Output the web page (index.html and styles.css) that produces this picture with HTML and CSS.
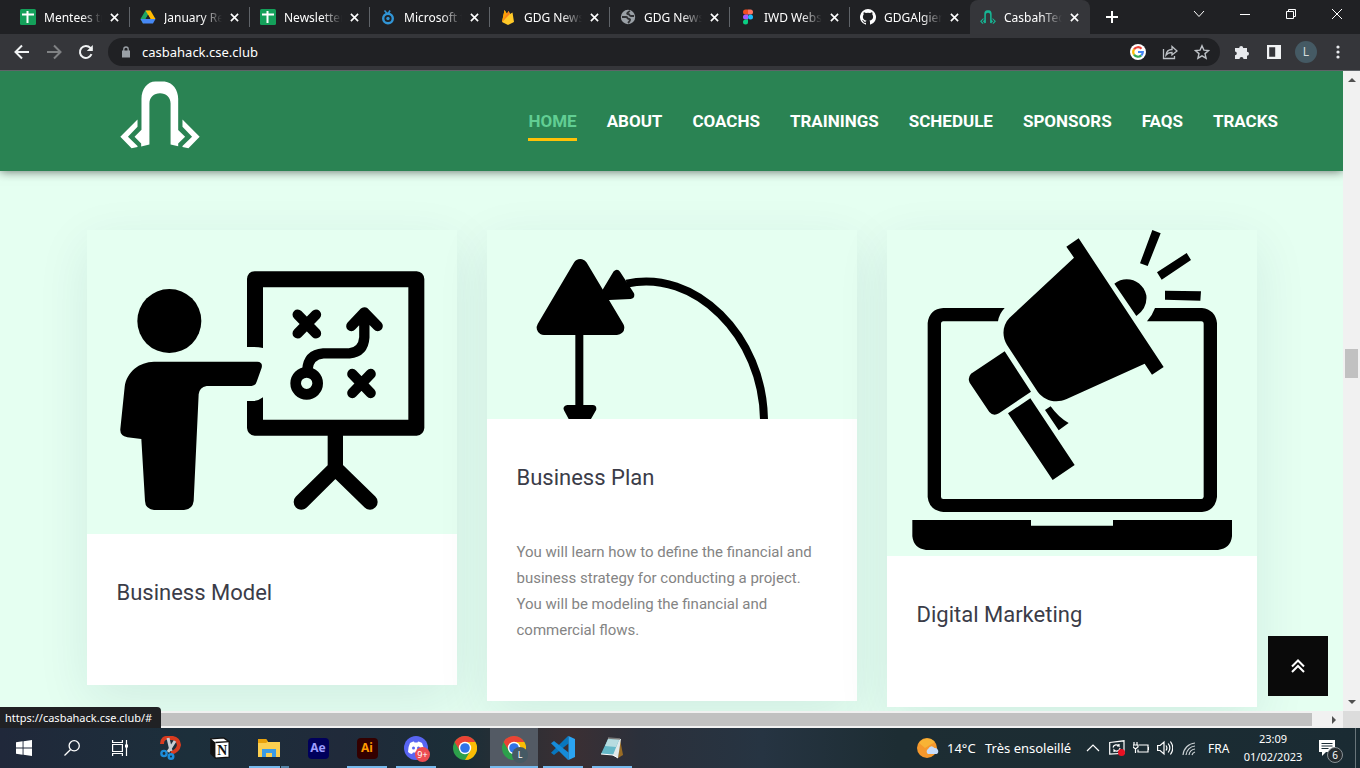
FILE: index.html
```html
<!DOCTYPE html>
<html lang="en">
<head>
<meta charset="utf-8">
<title>CasbahTech</title>
<link rel="stylesheet" href="styles.css">
</head>
<body>
<svg class="defs" aria-hidden="true">
  <symbol id="x" viewBox="0 0 10 10"><path d="M1 1l8 8M9 1L1 9" stroke="currentColor" stroke-width="1.8" fill="none"/></symbol>
  <symbol id="sheet" viewBox="0 0 16 16"><rect width="16" height="16" rx="1.5" fill="#14a05a"/><path d="M2 5.500h12M7.500 2v12" stroke="#fff" stroke-width="2"/></symbol>
  <symbol id="drive" viewBox="0 0 16 16"><path d="M5.500 1.500h5L8 6 3 14.500.5 10z" fill="#1fa463"/><path d="M10.500 1.500L15.500 10h-5L5.500 1.500z" fill="#ffba00"/><path d="M.5 10h15L13 14.500H3z" fill="#4688f4"/><path d="M8 6l2.400 4H5.600z" fill="#202124"/></symbol>
  <symbol id="chrome" viewBox="0 0 24 24"><circle cx="12" cy="12" r="12" fill="#2da04b"/><path d="M1.600 6A12 12 0 0 1 22.400 6L12 6.500 7 15z" fill="#ea4335"/><path d="M22.400 6A12 12 0 0 1 12 24l5.200-9L17.200 9 12 6z" fill="#fbbc05"/><circle cx="12" cy="12" r="6.200" fill="#fff"/><circle cx="12" cy="12" r="4.800" fill="#2f73e8"/></symbol>
  <symbol id="arch" viewBox="120 33 242 203"><path fill="currentColor" d="M184 230v-9l-20-21 21-21V85c0-29 18-52 42-52h28c24 3 41 25 41 52v95l21 20-21 21v8l-23-5V100c0-19-14-31-32-31s-32 12-32 31v124zM173 148l-52 52 34 35 18-4v-3l-29-28 29-30zM309 148l52 52-34 35-18-4v-3l29-28-29-30z"/></symbol>
</svg>
<div class="browser">
  <div class="tabstrip">
    <div class="tabs">
      <div class="tab"><svg class="fav"><use href="#sheet"/></svg><span class="tab-name">Mentees tr</span><button class="close" aria-label="Close Mentees"><svg><use href="#x"/></svg></button></div>
      <div class="tab"><svg class="fav"><use href="#drive"/></svg><span class="tab-name">January Re</span><button class="close" aria-label="Close January"><svg><use href="#x"/></svg></button></div>
      <div class="tab"><svg class="fav"><use href="#sheet"/></svg><span class="tab-name">Newsletter</span><button class="close" aria-label="Close Newsletter"><svg><use href="#x"/></svg></button></div>
      <div class="tab"><svg class="fav" viewBox="0 0 16 16"><g fill="none" stroke="#3195d6"><circle cx="8" cy="9.500" r="4.800" stroke-width="2.400"/><path d="M4.500 1.500l3 3.500M10 1.500L8 5" stroke-width="1.600"/></g><circle cx="8" cy="9.500" r="1.700" fill="#3195d6"/></svg><span class="tab-name">Microsoft f</span><button class="close" aria-label="Close Microsoft"><svg><use href="#x"/></svg></button></div>
      <div class="tab"><svg class="fav" viewBox="0 0 16 16"><path d="M2 13L4.500 1 7 5l1.500-3L10 5l2.500-1.500L14 13l-6 3z" fill="#ffc928"/><path d="M2 13L4.500 1 7 5l-3 6z" fill="#ffa000"/><path d="M2 13L8.500 2 10 5z" fill="#f58220"/></svg><span class="tab-name">GDG News</span><button class="close" aria-label="Close GDG News"><svg><use href="#x"/></svg></button></div>
      <div class="tab"><svg class="fav" viewBox="0 0 16 16"><circle cx="8" cy="8" r="7.200" fill="#9aa0a6"/><path d="M2 8h4c2 0 1 2 3 2s1 2-1 4M14 7h-3c-2 0-1-2-3-2S8 3 10 2" fill="none" stroke="#303134" stroke-width="1.800"/></svg><span class="tab-name">GDG News</span><button class="close" aria-label="Close GDG News 2"><svg><use href="#x"/></svg></button></div>
      <div class="tab"><svg class="fav" viewBox="0 0 16 16"><path d="M8 .5H5.500a2.500 2.500 0 0 0 0 5H8z" fill="#f24e1e"/><path d="M8 .5h2.500a2.500 2.500 0 0 1 0 5H8z" fill="#ff7262"/><path d="M8 5.500H5.500a2.500 2.500 0 0 0 0 5H8z" fill="#a259ff"/><circle cx="10.500" cy="8" r="2.500" fill="#1abcfe"/><path d="M8 10.500H5.500A2.500 2.500 0 1 0 8 13z" fill="#0acf83"/></svg><span class="tab-name">IWD Webs</span><button class="close" aria-label="Close IWD Website"><svg><use href="#x"/></svg></button></div>
      <div class="tab"><svg class="fav" viewBox="0 0 16 16"><path fill="#fff" d="M8 0a8 8 0 0 0-2.500 15.600c.4.100.5-.2.500-.4v-1.400c-2.200.5-2.700-1-2.700-1-.4-.9-.9-1.200-.9-1.200-.7-.5.100-.5.100-.5.800.100 1.200.8 1.200.8.700 1.300 1.900.9 2.300.7.100-.5.300-.9.500-1.100-1.800-.2-3.600-.9-3.600-4 0-.9.300-1.600.8-2.100-.1-.2-.4-1 .1-2.100 0 0 .7-.2 2.200.8a7.500 7.500 0 0 1 4 0c1.500-1 2.200-.8 2.200-.8.4 1.100.2 1.900.1 2.100.5.600.8 1.300.8 2.100 0 3.100-1.900 3.800-3.700 4 .3.300.6.800.6 1.500v2.200c0 .2.100.5.500.4A8 8 0 0 0 8 0z"/></svg><span class="tab-name">GDGAlgier</span><button class="close" aria-label="Close GDGAlgiers"><svg><use href="#x"/></svg></button></div>
      <div class="tab tab-active"><svg class="fav teal"><use href="#arch"/></svg><span class="tab-name">CasbahTec</span><button class="close" aria-label="Close CasbahTech"><svg><use href="#x"/></svg></button></div>
    </div>
    <button class="new-tab" aria-label="New tab"><svg viewBox="0 0 12 12"><path d="M6 0v12M0 6h12" stroke="#fff" stroke-width="2"/></svg></button>
    <div class="window-controls">
      <button aria-label="Search tabs"><svg viewBox="0 0 12 12"><path d="M1 3l5 5.500L11 3"/></svg></button>
      <button aria-label="Minimize"><svg viewBox="0 0 12 12"><path d="M1 6.500h10"/></svg></button>
      <button aria-label="Restore"><svg viewBox="0 0 12 12"><path d="M1.500 3.500h7v7h-7zM3.500 3.500v-2h7v7h-2"/></svg></button>
      <button aria-label="Close window"><svg viewBox="0 0 12 12"><path d="M1 1l10 10M11 1L1 11"/></svg></button>
    </div>
  </div>
  <div class="toolbar">
    <div class="nav-buttons">
      <button aria-label="Back"><svg viewBox="0 0 16 16"><path d="M15 8H2M8 1.500L1.500 8 8 14.500"/></svg></button>
      <button class="dim" aria-label="Forward"><svg viewBox="0 0 16 16"><path d="M1 8h13M8 1.500L14.500 8 8 14.500"/></svg></button>
      <button aria-label="Reload"><svg viewBox="0 0 16 16"><path d="M13.500 10.200A6 6 0 1 1 12.400 3.900L14 5.500"/><path d="M14.800 1v6h-6z" class="solid"/></svg></button>
    </div>
    <div class="omnibox">
      <svg class="lock" viewBox="0 0 10 12"><rect x="1" y="4.500" width="8" height="7" fill="#9aa0a6"/><path d="M2.800 5V3.200a2.200 2.200 0 0 1 4.400 0V5" fill="none" stroke="#9aa0a6" stroke-width="1.300"/></svg>
      <input class="address" type="text" aria-label="Address" value="casbahack.cse.club">
      <button aria-label="Google"><svg viewBox="0 0 16 16"><circle cx="8" cy="8" r="8" fill="#fff"/><g fill="none" stroke-width="2.200"><path d="M4 5.400A4.800 4.800 0 0 1 11.500 4.700" stroke="#ea4335"/><path d="M4 10.600a4.800 4.800 0 0 1 0-5.200" stroke="#fbbc05"/><path d="M11.300 11.400A4.800 4.800 0 0 1 4 10.600" stroke="#34a853"/><path d="M8 8h4.800a4.800 4.800 0 0 1-1.500 3.400" stroke="#4285f4"/></g></svg></button>
      <button aria-label="Share"><svg viewBox="0 0 16 16" fill="none" stroke="#bdc1c6" stroke-width="1.300"><path d="M1.500 5v9.500h11V12"/><path d="M4 11c.5-4 3-5.500 6-5.500V2.500L15 7l-5 4V8.500C7.500 8.500 5.500 9 4 11z"/></svg></button>
      <button aria-label="Bookmark"><svg viewBox="0 0 16 16" fill="none" stroke="#bdc1c6" stroke-width="1.400"><path d="M8 1.800l1.900 4.300 4.700.4-3.600 3.100 1.100 4.600L8 11.800l-4.100 2.400L5 9.600 1.400 6.500l4.700-.4z"/></svg></button>
    </div>
    <div class="tools">
      <button aria-label="Extensions"><svg viewBox="0 0 16 16"><path fill="#e8eaed" d="M1 4h4.200a2 2 0 1 1 4 0H13v3.800a2 2 0 1 1 0 4V15H9.500a2 2 0 0 0-4 0H1v-3.800a1.800 1.800 0 0 0 0-3.600z"/></svg></button>
      <button aria-label="Side panel"><svg viewBox="0 0 16 16"><path fill="#f1f3f4" fill-rule="evenodd" d="M1 1h14v14H1zM3.200 3.200v9.600h6V3.200z"/></svg></button>
      <button aria-label="Profile"><span class="avatar">L</span></button>
      <button aria-label="Menu"><svg viewBox="0 0 16 16" fill="#e8eaed"><circle cx="8" cy="3" r="1.600"/><circle cx="8" cy="8" r="1.600"/><circle cx="8" cy="13" r="1.600"/></svg></button>
    </div>
  </div>
  <div class="viewport">
    <div class="page">
      <header class="site-header">
        <a class="logo" href="#" aria-label="CasbahTech"><svg><use href="#arch"/></svg></a>
        <nav class="site-nav">
          <a class="current" href="#">HOME</a><a href="#">ABOUT</a><a href="#">COACHS</a><a href="#">TRAININGS</a><a href="#">SCHEDULE</a><a href="#">SPONSORS</a><a href="#">FAQS</a><a href="#">TRACKS</a>
        </nav>
      </header>
      <main class="cards">
        <article class="card">
          <svg class="card-art" viewBox="21 15 1110 912">
            <circle cx="268" cy="288" r="96"/>
            <path d="M222 410H532Q549 411 545 428L530 470Q526 483 515 483H380Q358 487 356 508L341 828Q338 853 312 855H222Q196 852 195 828L184 642L142 637Q119 632 121 612L134 486C140 440 178 411 222 410z"/>
            <path d="M501 366V162Q503 140 524 139H1010Q1031 141 1033 162V609Q1031 630 1010 632H524Q503 630 501 609V528H522Q538 526 549 517V584H985V187H549V369Q535 366 520 366z"/>
            <g fill="none" stroke="#000" stroke-linecap="round" stroke-linejoin="round">
              <path d="M653 269L708 325M708 269L653 325M817 447L872 504M872 447L817 504" stroke-width="31"/>
              <path d="M814 303L853 262L893 303M853 270V337Q850 381 808 385H730Q684 389 682 435" stroke-width="31"/>
              <circle cx="680" cy="475" r="33" stroke-width="32"/>
              <path d="M766 632V730M664 831L766 730L870 831" stroke-width="46"/>
            </g>
          </svg>
          <div class="card-body"><h3>Business Model</h3></div>
        </article>
        <article class="card">
          <svg class="card-art" viewBox="21 15 1110 567">
            <g stroke="#000" stroke-linejoin="round">
              <path d="M301 124L192 308H411z" stroke-width="44"/>
              <path d="M410 147L370 214L451 210z" stroke-width="24"/>
              <path d="M262 551H338L310 600H288z" stroke-width="22"/>
            </g>
            <path d="M298 320V560M440 176C640 130 852 330 852 590" fill="none" stroke="#000" stroke-width="24"/>
          </svg>
          <div class="card-body"><h3>Business Plan</h3><p>You will learn how to define the financial and business strategy for conducting a project. You will be modeling the financial and commercial flows.</p></div>
        </article>
        <article class="card">
          <svg class="card-art" viewBox="21 15 1110 978">
            <path d="M374 249H190Q148 252 143 294V816Q147 856 190 861H966Q1006 857 1011 816V294Q1006 254 966 249H825Q816 273 801 289H964Q971 289 971 297V815Q970 822 964 822H190Q183 822 183 815V297Q183 289 190 289H354Q357 267 374 249z"/>
            <path d="M97 885H453V902H699V885H1056V934Q1052 970 1014 975H138Q101 970 97 934z"/>
            <path d="M596 40L851 426L816 449L794 416L560 522C526 537 493 526 473 500L381 360C365 333 367 302 388 279L582 98L559 65z"/>
            <path d="M374 379L453 500L357 565Q340 575 328 561L269 473Q262 459 273 446zM451 520L584 720L518 765L384 565zM495 555L512 544Q535 577 566 594L536 616z"/>
            <path d="M703 176C739 148 790 168 799 211Q803 249 769 273zM817 15L842 25L803 123L780 115zM920 84L933 105L845 164L831 142zM855 197L963 199L961 227L855 224z"/>
          </svg>
          <div class="card-body"><h3>Digital Marketing</h3></div>
        </article>
      </main>
      <button class="to-top" aria-label="Back to top"><svg viewBox="0 0 16 16"><path d="M2 8.500l6-6 6 6M2 14l6-6 6 6"/></svg></button>
    </div>
    <div class="vscroll"><svg viewBox="0 0 8 4"><path d="M0 4l4-4 4 4z"/></svg><div class="vtrack"><div class="vspace"></div><div class="vthumb"></div></div><svg viewBox="0 0 8 4"><path d="M0 0l4 4 4-4z"/></svg></div>
    <div class="hscroll"><div class="hthumb"></div><svg viewBox="0 0 4 8"><path d="M0 0l4 4-4 4z"/></svg></div>
    <div class="corner"></div>
    <div class="status">https://casbahack.cse.club/#</div>
  </div>
</div>
<footer class="taskbar">
  <div class="system">
    <button aria-label="Start"><svg class="i16" viewBox="0 0 16 16"><path fill="#fff" d="M0 2.200L6.600 1.300v6.200H0zM7.500 1.200L16 0v7.500H7.500zM0 8.500h6.600v6.200L0 13.800zM7.500 8.500H16V16l-8.500-1.200z"/></svg></button>
    <button aria-label="Search"><svg class="i16" viewBox="0 0 16 16" fill="none" stroke="#fff" stroke-width="1.300"><circle cx="10.200" cy="5.800" r="5.100"/><path d="M6.600 9.500L.5 15.500"/></svg></button>
    <button aria-label="Task view"><svg class="i16" viewBox="0 0 16 16" fill="none" stroke="#fff" stroke-width="1.200"><path d="M.6 0v2.500h9.800V0M.6 16v-2.500h9.800V16M.6 4.500h9.800v7H.6zM14.500 0v16"/><path d="M13 4.500h3v3h-3z" fill="#fff" stroke="none"/></svg></button>
  </div>
  <div class="apps">
    <button aria-label="Snipping Tool"><svg class="i24" viewBox="0 0 24 24"><path d="M3 8Q3 1 10 2Q19 1 20 9Q19 15 12 17" fill="none" stroke="#d83b1f" stroke-width="4"/><path d="M9 2l3 13M16 5L9 16" stroke="#c7ccd1" stroke-width="3"/><g fill="none" stroke="#1e8ddb" stroke-width="2.400"><circle cx="5" cy="17.500" r="2.600"/><circle cx="12" cy="20.500" r="2.300"/></g></svg></button>
    <button aria-label="Notion"><svg class="i22" viewBox="0 0 22 24"><path d="M1 2l14-1 6 4v17l-15 1-5-5z" fill="#fff" stroke="#111" stroke-width="1.500"/><path d="M1 2l5 4v17l-5-5z" fill="#111"/><path d="M6 6l15-1" stroke="#111" stroke-width="1.500"/><text x="8" y="20" class="notion">N</text></svg></button>
    <button class="open split" aria-label="File Explorer"><svg class="i22" viewBox="0 0 22 20"><path d="M0 1h8l2 3h12v15H0z" fill="#fccf50"/><path d="M0 1h8l2 2.500-2 1.500H0z" fill="#e9a20b"/><path d="M4 11h14v8h-4v-4H8v4H4z" fill="#3b9be5"/></svg></button>
    <button aria-label="After Effects"><span class="adobe ae">Ae</span></button>
    <button class="open" aria-label="Illustrator"><span class="adobe ai">Ai</span></button>
    <button class="open" aria-label="Discord"><svg class="i24" viewBox="0 0 24 24"><circle cx="12" cy="12" r="12" fill="#5865f2"/><path fill="#fff" d="M6 7q3-2 4-1.500l.5 1h3l.5-1q2 0 4 1.500 2 4 2 9-2 2-4 2l-1-1.500H9L8 18q-2 0-4-2 0-5 2-9z"/><circle cx="9.500" cy="12" r="1.500" fill="#5865f2"/><circle cx="14.500" cy="12" r="1.500" fill="#5865f2"/></svg><span class="count">9+</span></button>
    <button aria-label="Chrome"><svg class="i24"><use href="#chrome"/></svg></button>
    <button class="open focused" aria-label="Chrome profile L"><svg class="i24"><use href="#chrome"/></svg><span class="profile">L</span></button>
    <button class="open" aria-label="VS Code"><svg class="i24" viewBox="0 0 24 24"><path d="M17.500 0v7.500L3 19 0 16.800 17 0z" fill="#0877bf"/><path d="M0 7.200L3 5l14.500 11.500V24H17z" fill="#168bd8"/><path d="M17.500 0L24 3v18l-6.500 3z" fill="#2ba4f2"/></svg></button>
    <button class="open" aria-label="Notepad"><svg class="i22" viewBox="0 0 22 22"><path d="M19 2l3 16-5 3z" fill="#9a6c24"/><path d="M7 1l13 1-3 19-6-3z" fill="#e1e9e9"/><path d="M7 2l11 1-6 15-12-1z" fill="#65b8c8"/><path d="M7 2l11 1-3 7-11-1z" fill="#b7dce0"/><path d="M7 1l12 1" stroke="#777" stroke-width="1.500"/><path d="M0 17l12 1 5 3" fill="none" stroke="#fff"/></svg></button>
  </div>
  <div class="tray">
    <svg class="i22" viewBox="0 0 22 20"><circle cx="10" cy="10" r="10" fill="#f5982c"/><path d="M2 5A10 10 0 0 1 18 4L8 10z" fill="#fac53c" opacity=".6"/><path d="M11 16a3 3 0 0 1 0-5q3-5 6.500-1a3.200 3.200 0 0 1 2 6z" fill="#c6dcfa"/></svg>
    <span class="temp">14°C</span><span class="weather">Très ensoleillé</span>
    <div class="tray-icons">
      <svg viewBox="0 0 16 16"><path d="M2 11l6-6 6 6"/></svg>
      <svg viewBox="0 0 16 16"><path d="M.7 2.500L15 .8v12.500L.7 14zM4 7.500A3.500 3.500 0 0 1 10 6V4M10 6H8M11 8a3.500 3.500 0 0 1-6 2v2"/><circle cx="12.500" cy="12.500" r="3.500" class="alert"/></svg>
      <svg viewBox="0 0 16 16"><path d="M6 5h9v7H5V9.500M15.700 7v3M1 2v3M4 2v3M0 5h5v2L2.500 9 0 7zM2.500 9v4"/></svg>
      <svg viewBox="0 0 16 16"><path d="M.6 5.500h2.500L7 2v12l-3.900-3.500H.6zM9 5.500q1.800 2.500 0 5M11.200 3.500q3.300 4.500 0 9M13.400 1.500q4.800 6.500 0 13"/></svg>
      <svg viewBox="0 0 16 16"><path d="M2 15A13 13 0 0 1 14 3M5 15A10 10 0 0 1 14 6M8 15a7 7 0 0 1 6-6M11 15a4 4 0 0 1 3-3" stroke="#ccd2d5"/></svg>
    </div>
    <span class="lang">FRA</span>
    <div class="clock"><time>23:09</time><span>01/02/2023</span></div>
    <div class="notice"><svg viewBox="0 0 16 16"><path fill="#fff" d="M0 0h16v12H7l-4 4v-4H0z"/><path d="M2.500 3.500h11M2.500 6h11M2.500 8.500h7" stroke="#1b2d36" stroke-width="1.200"/></svg><span>6</span></div>
    <div class="desktop-edge"></div>
  </div>
</footer>
</body>
</html>
```
FILE: styles.css
```css
* { box-sizing: border-box; }
body {
  margin: 0;
  height: 100vh;
  display: flex;
  flex-direction: column;
  overflow: hidden;
  font-family: "Noto Sans", "Open Sans", sans-serif;
  font-size: 12px;
  color: #fff;
}
button {
  border: 0;
  padding: 0;
  background: none;
  color: inherit;
  font: inherit;
  display: flex;
  align-items: center;
  justify-content: center;
}
svg { display: block; }
.defs { position: absolute; width: 0; height: 0; }
.browser { flex: 1; min-height: 0; display: flex; flex-direction: column; }

/* Tab strip */
.tabstrip { height: 34px; display: flex; background: #202124; padding-left: 10px; }
.tabs { display: flex; }
.tab {
  width: 120px;
  display: flex;
  align-items: center;
  padding-left: 10px;
  background: linear-gradient(#5f6368, #5f6368) right center / 1px 20px no-repeat;
}
.tab:nth-last-child(2) { background: none; }
.tab-active { background: #35363a; border-radius: 8px 8px 0 0; }
.fav { width: 16px; height: 16px; flex: none; }
.teal { color: #16b795; }
.tab-name {
  margin-left: 8px;
  width: 58px;
  white-space: nowrap;
  mask-image: linear-gradient(90deg, #000 65%, transparent);
}
.close { width: 24px; height: 24px; }
.close svg { width: 9px; height: 9px; }
.new-tab { width: 44px; }
.new-tab svg { width: 12px; height: 12px; }
.window-controls { margin-left: auto; display: flex; height: 28px; }
.window-controls button { width: 46px; }
.window-controls svg { width: 12px; height: 12px; fill: none; stroke: #fff; }

/* Toolbar */
.toolbar { height: 37px; display: flex; align-items: center; background: #35363a; border-bottom: 1px solid #5f6368; }
.nav-buttons { display: flex; padding: 0 6px; }
.nav-buttons button { width: 32px; height: 32px; }
.nav-buttons svg { width: 16px; height: 16px; fill: none; stroke: #f1f3f4; stroke-width: 2; }
.nav-buttons .solid { fill: #f1f3f4; stroke: none; }
.dim { opacity: .4; }
.omnibox {
  flex: 1;
  height: 28px;
  display: flex;
  align-items: center;
  background: #202124;
  border-radius: 14px;
  padding: 0 2px 0 13px;
}
.lock { width: 10px; height: 12px; }
.address {
  flex: 1;
  min-width: 0;
  margin-left: 11px;
  padding: 0;
  border: 0;
  outline: 0;
  background: none;
  color: #fff;
  font: 13px "Noto Sans", sans-serif;
}
.omnibox button { width: 32px; height: 28px; }
.omnibox button svg, .tools svg { width: 16px; height: 16px; }
.tools { display: flex; align-items: center; padding: 0 6px; }
.tools button { width: 32px; height: 28px; }
.avatar { width: 22px; height: 22px; border-radius: 50%; background: #455a64; color: #d5dadd; line-height: 22px; }

/* Page area with scrollbars */
.viewport {
  flex: 1;
  min-height: 0;
  display: grid;
  grid-template-columns: minmax(0, 1fr) 17px;
  grid-template-rows: minmax(0, 1fr) 17px;
  position: relative;
}
.page {
  position: relative;
  overflow: hidden;
  background: #e5fff1;
  font-family: Roboto, sans-serif;
}
.site-header {
  position: relative;
  height: 100px;
  display: flex;
  justify-content: space-between;
  padding: 10px 65px 0 120px;
  background: #2a8353;
  box-shadow: 0 0 10px rgba(0, 0, 0, .6);
}
.logo { color: #fff; }
.logo svg { width: 80px; height: 68px; }
.site-nav { display: flex; gap: 30px; padding-top: 30px; }
.site-nav a {
  height: 30px;
  color: #fff;
  font-size: 17px;
  font-weight: 700;
  line-height: 20px;
  text-decoration: none;
}
.site-nav .current {
  color: #61ce93;
  background: linear-gradient(#ffc107, #ffc107) 0 bottom / 100% 3px no-repeat;
}
.cards {
  max-width: 1170px;
  margin: 59px auto 0;
  display: grid;
  grid-template-columns: repeat(3, minmax(0, 1fr));
  gap: 30px;
  align-items: start;
}
.card { background: #fff; box-shadow: 0 15px 50px rgba(8, 50, 90, .09); }
.card-art { width: 100%; height: auto; background: #e5fff1; }
.card-body { padding: 45px 30px 31px; }
.card h3 { margin: 0 0 47px; color: #3b3c48; font-size: 22px; font-weight: 400; line-height: 28px; }
.card p { margin: 0 0 27px; color: #848484; font-size: 15px; line-height: 26px; }
.to-top { position: absolute; right: 15px; bottom: 15px; width: 60px; height: 60px; background: #0a0a0a; }
.to-top svg { width: 16px; height: 16px; fill: none; stroke: #fff; stroke-width: 2; }
.vscroll {
  display: flex;
  flex-direction: column;
  align-items: center;
  gap: 7px;
  padding: 7px 0;
  background: #f1f1f1;
}
.vscroll svg { width: 8px; height: 4px; fill: #505050; }
.vtrack { flex: 1; width: 13px; display: flex; flex-direction: column; }
.vspace { flex: 0 0 43%; }
.vthumb { height: 29px; background: #c1c1c1; }
.hscroll { display: flex; align-items: center; background: #f1f1f1; padding: 0 7px 0 17px; }
.hthumb { flex: 1; height: 13px; margin-right: 20px; background: #c1c1c1; }
.hscroll svg { width: 4px; height: 8px; fill: #505050; }
.corner { background: #dcdcdc; }
.status {
  position: absolute;
  left: 0;
  bottom: 0;
  width: 161px;
  height: 21px;
  padding-left: 5px;
  background: #202124;
  border-radius: 0 4px 0 0;
  line-height: 21px;
  font-size: 11px;
  white-space: nowrap;
}

/* Taskbar */
.taskbar {
  height: 40px;
  display: flex;
  background: linear-gradient(90deg, #20283a 0, #1c2f3b 14%, #202a3a 25%, #1b2e37 34%, #3b2f33 42%, #2b303b 47%, #263442 56%, #1d2d33 66%, #1a2b33 100%);
}
.system, .apps { display: flex; }
.system button { width: 48px; }
.apps { margin-left: 3px; gap: 1px; }
.apps button { position: relative; width: 48px; }
.i16 { width: 16px; height: 16px; }
.i22 { width: 22px; height: 22px; }
.i24 { width: 24px; height: 24px; }
.notion { font: bold 15px "Liberation Serif", serif; fill: #111; }
.apps .open { background: linear-gradient(#76b9ed, #76b9ed) center bottom / 40px 2px no-repeat; }
.apps .split { background: linear-gradient(90deg, #76b9ed 31px, #1b2e37 31px, #1b2e37 32px, #5585a9 32px) center bottom / 40px 2px no-repeat; }
.apps .focused { background: linear-gradient(#76b9ed, #76b9ed) center bottom / 100% 2px no-repeat, #535a64; }
.adobe { width: 21px; height: 21px; border-radius: 4px; font-size: 12px; font-weight: 700; line-height: 20px; }
.ae { background: #00005b; color: #9c9cff; }
.ai { background: #330000; color: #ff9a00; }
.count, .profile {
  position: absolute;
  border-radius: 50%;
  width: 15px;
  height: 15px;
  left: 23px;
  top: 19px;
  background: #ed4c52;
  font-size: 9px;
  line-height: 15px;
}
.profile { width: 16px; height: 16px; left: 22px; background: #455a64; line-height: 16px; }
.tray { margin-left: auto; display: flex; align-items: center; white-space: nowrap; }
.temp { width: 30px; margin-left: 8px; font-size: 13px; }
.weather { width: 86px; margin-left: 8px; font-size: 13px; }
.tray-icons { display: flex; gap: 8px; margin-left: 14px; }
.tray-icons svg { width: 16px; height: 16px; fill: none; stroke: #fff; stroke-width: 1.2; }
.tray-icons .alert { fill: #e81123; stroke: none; }
.lang { width: 22px; margin-left: 11px; }
.clock { display: flex; flex-direction: column; align-items: center; width: 60px; margin-left: 13px; font-size: 11px; line-height: 18px; }
.notice { position: relative; margin-left: 16px; margin-right: 20px; }
.notice svg { width: 16px; height: 16px; }
.notice span {
  position: absolute;
  left: 8px;
  top: 7px;
  width: 16px;
  height: 16px;
  border: 1px solid #8a9296;
  border-radius: 50%;
  background: #252b2f;
  text-align: center;
  font-size: 10px;
  line-height: 14px;
}
.desktop-edge { width: 5px; align-self: stretch; border-left: 1px solid #69757a; }
```
